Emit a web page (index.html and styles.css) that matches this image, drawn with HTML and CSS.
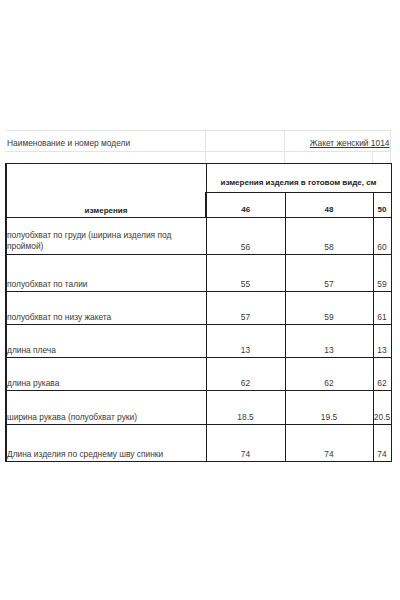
FILE: index.html
```html
<!DOCTYPE html>
<html>
<head>
<meta charset="utf-8">
<link rel="stylesheet" href="styles.css">
</head>
<body>
<div class="page">
  <table class="top">
    <colgroup><col class="c1"><col class="c2"><col class="c3"><col class="c4"></colgroup>
    <tr class="t1">
      <td class="lbl">Наименование и номер модели</td>
      <td></td>
      <td colspan="2" class="model"><span>Жакет женский 1014</span></td>
    </tr>
    <tr class="t2"><td></td><td></td><td></td><td></td></tr>
  </table>
  <table class="grid">
    <colgroup><col class="c1"><col class="c2"><col class="c3"><col class="c4"></colgroup>
    <tr class="h1">
      <td rowspan="2" class="b name-h">измерения</td>
      <td colspan="3" class="b cen">измерения изделия в готовом виде, см</td>
    </tr>
    <tr class="h2">
      <td class="b num">46</td><td class="b num">48</td><td class="b num">50</td>
    </tr>
    <tr class="r36"><td class="name wrap">полуобхват по груди (ширина изделия под проймой)</td><td class="num">56</td><td class="num">58</td><td class="num">60</td></tr>
    <tr class="r36"><td class="name">полуобхват по талии</td><td class="num">55</td><td class="num">57</td><td class="num">59</td></tr>
    <tr class="r33"><td class="name">полуобхват по низу жакета</td><td class="num">57</td><td class="num">59</td><td class="num">61</td></tr>
    <tr class="r33"><td class="name">длина плеча</td><td class="num">13</td><td class="num">13</td><td class="num">13</td></tr>
    <tr class="r33"><td class="name">длина рукава</td><td class="num">62</td><td class="num">62</td><td class="num">62</td></tr>
    <tr class="r34"><td class="name">ширина рукава (полуобхват руки)</td><td class="num">18.5</td><td class="num">19.5</td><td class="num">20.5</td></tr>
    <tr class="r37"><td class="name">Длина изделия по среднему шву спинки</td><td class="num">74</td><td class="num">74</td><td class="num">74</td></tr>
  </table>
</div>
</body>
</html>
```

FILE: styles.css
```css
html, body {
  margin: 0;
  padding: 0;
  background: #fff;
}
body {
  font-family: "Liberation Sans", Arial, sans-serif;
  font-size: 8.4px;
  color: #3a3a3a;
}
.page {
  padding: 130px 0 0 5px;
}
table {
  border-collapse: collapse;
  table-layout: fixed;
  width: 385px;
}
.c1 { width: 200px; }
.c2 { width: 79px; }
.c3 { width: 88px; }
.c4 { width: 18px; }
td {
  padding: 0 1px 2px 1px;
  vertical-align: bottom;
  white-space: nowrap;
  overflow: visible;
  line-height: 10px;
}
.top td {
  border: 1px solid #e4e4e4;
  border-left: none;
}
.top tr.t1 td { height: 17px; padding-bottom: 3px; }
.top tr.t2 td { height: 11px; padding-bottom: 0; border-bottom: none; }
.top .lbl { padding-left: 2px; }
.top .model {
  text-align: right;
  padding-right: 0;
  padding-bottom: 3px;
}
.top .model span { text-decoration: underline; }
.grid td {
  border: 1px solid #1e1e1e;
}
.grid td:first-child { border-left: 2px solid #1e1e1e; }
.grid .b { font-weight: bold; color: #1e1e1e; font-size: 8px; }
.grid .cen { text-align: center; padding-bottom: 4px; }
.grid .name-h { text-align: center; padding-bottom: 1px; }
.h1 td { height: 24px; }
.h2 td { height: 22px; }
.num { text-align: center; padding-left: 0; padding-right: 0; }
.name { padding-left: 0; }
.name.wrap { white-space: normal; padding-right: 20px; line-height: 11px; }
.r36 td { height: 34px; }
.r33 td { height: 30px; }
.r34 td { height: 31px; }
.r37 td { height: 34px; }
```
